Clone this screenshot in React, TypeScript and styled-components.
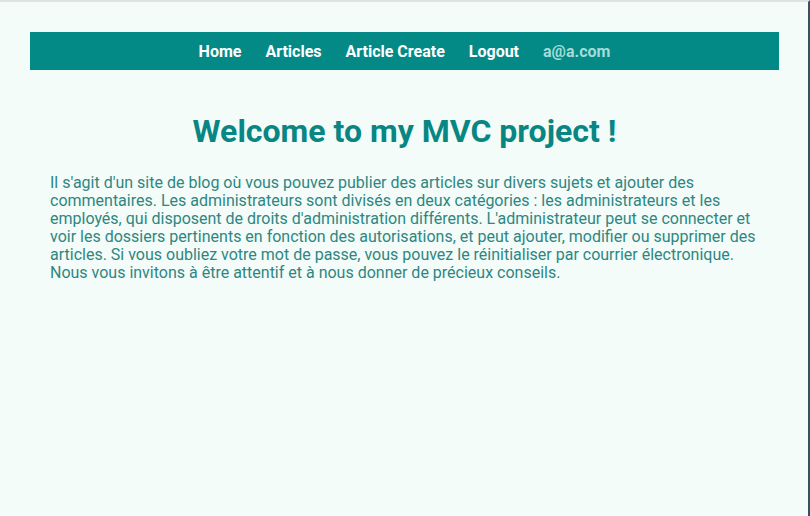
import React from "react";
import styled, { createGlobalStyle } from "styled-components";

const GlobalStyle = createGlobalStyle`
  html, body {
    margin: 0;
    padding: 0;
    height: 100%;
  }
  body {
    background: #f3fcf8;
    font-family: Roboto, "Liberation Sans", sans-serif;
  }
  #root {
    min-height: 100%;
  }
`;

const Frame = styled.div`
  box-sizing: border-box;
  height: 516px;
  border-top: 2px solid #dde3e1;
  border-right: 2px solid #3a4f63;
  background: #f3fcf8;
  padding: 30px 29px 0 30px;
`;

const NavBar = styled.nav`
  height: 38px;
  background: #038a87;
  display: flex;
  align-items: center;
  justify-content: center;
  gap: 24px;
`;

const NavLink = styled.a<{ $muted?: boolean }>`
  font-size: 16px;
  font-weight: 700;
  color: ${(p) => (p.$muted ? "#a4dcd7" : "#ffffff")};
  text-decoration: none;
  cursor: pointer;
`;

const Main = styled.main`
  padding: 0 20px;
`;

const Title = styled.h1`
  margin: 42px 0 0;
  text-align: center;
  font-size: 32px;
  font-weight: 700;
  line-height: 38px;
  color: #078683;
`;

const Text = styled.p`
  margin: 24px 0 0;
  font-size: 16px;
  line-height: 18px;
  color: #2e8683;
`;

export default function App() {
  return (
    <>
      <GlobalStyle />
      <Frame>
        <NavBar>
          <NavLink>Home</NavLink>
          <NavLink>Articles</NavLink>
          <NavLink>Article Create</NavLink>
          <NavLink>Logout</NavLink>
          <NavLink $muted>a@a.com</NavLink>
        </NavBar>
        <Main>
          <Title>Welcome to my MVC project !</Title>
          <Text>
            Il s'agit d'un site de blog où vous pouvez publier des articles sur divers sujets et ajouter des
            commentaires. Les administrateurs sont divisés en deux catégories : les administrateurs et les
            employés, qui disposent de droits d'administration différents. L'administrateur peut se connecter et
            voir les dossiers pertinents en fonction des autorisations, et peut ajouter, modifier ou supprimer des
            articles. Si vous oubliez votre mot de passe, vous pouvez le réinitialiser par courrier électronique.
            Nous vous invitons à être attentif et à nous donner de précieux conseils.
          </Text>
        </Main>
      </Frame>
    </>
  );
}
